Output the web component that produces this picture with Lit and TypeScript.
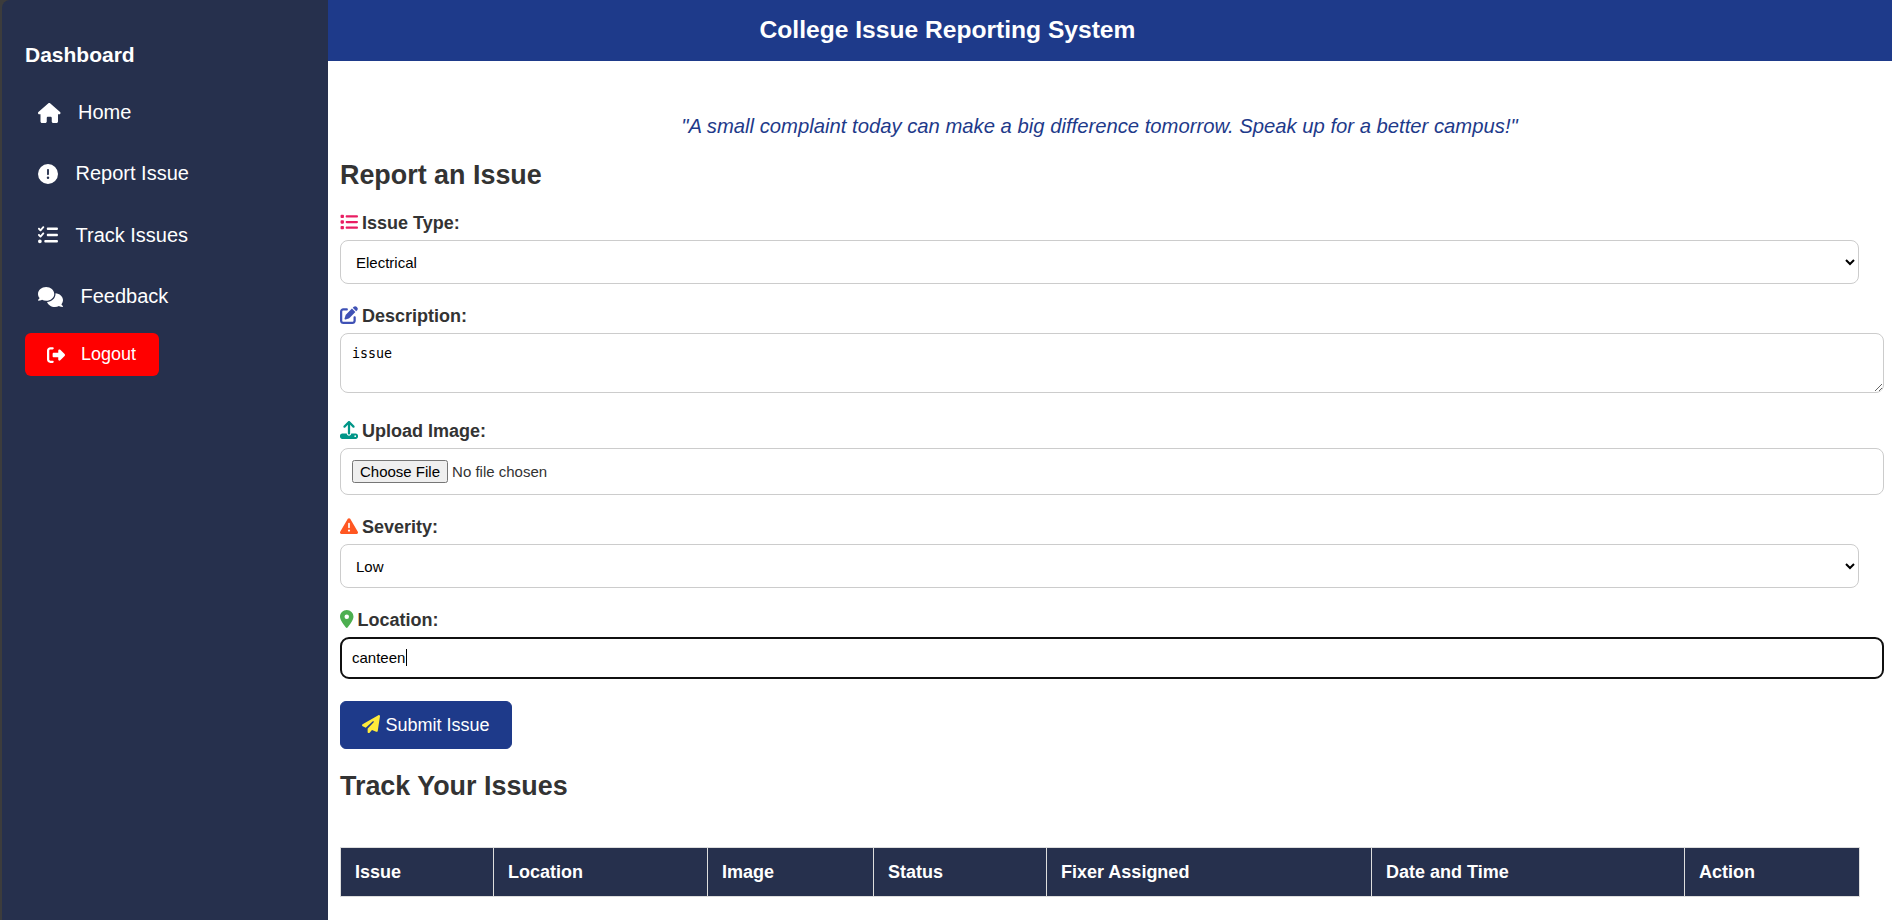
import { LitElement, html, css, svg } from "lit";
import { customElement } from "lit/decorators.js";

const icon = (w: number, d: string, cls = "") =>
  html`<svg class="ico ${cls}" viewBox="0 0 ${w} 512" fill="currentColor">${svg`<path d=${d}></path>`}</svg>`;

const HOUSE = "M575.8 255.5c0 18-15 32.1-32 32.1h-32l.7 160.2c0 2.7-.2 5.4-.5 8.1V472c0 22.1-17.9 40-40 40H456c-1.1 0-2.2 0-3.3-.1c-1.4 .1-2.8 .1-4.2 .1H416 392c-22.1 0-40-17.9-40-40V448 384c0-17.7-14.3-32-32-32H256c-17.7 0-32 14.3-32 32v64 24c0 22.1-17.9 40-40 40H160 128.1c-1.5 0-3-.1-4.5-.2c-1.2 .1-2.4 .2-3.6 .2H104c-22.1 0-40-17.9-40-40V360c0-.9 0-1.9 .1-2.8V287.6H32c-18 0-32-14-32-32.1c0-9 3-17 10-24L266.4 8c7-7 15-8 22-8s15 2 21 7L564.8 231.5c8 7 12 15 11 24z";
const ALERT = "M256 512A256 256 0 1 0 256 0a256 256 0 1 0 0 512zm0-384c13.3 0 24 10.7 24 24V264c0 13.3-10.7 24-24 24s-24-10.7-24-24V152c0-13.3 10.7-24 24-24zM224 352a32 32 0 1 1 64 0 32 32 0 1 1 -64 0z";
const TASKS = "M152.1 38.2c9.9 8.9 10.7 24 1.8 33.9l-72 80c-4.4 4.9-10.6 7.8-17.2 7.9s-12.9-2.4-17.6-7L7 113C-2.3 103.6-2.3 88.4 7 79s24.6-9.4 33.9 0l22.1 22.1 55.1-61.2c8.9-9.9 24-10.7 33.9-1.8zm0 160c9.9 8.9 10.7 24 1.8 33.9l-72 80c-4.4 4.9-10.6 7.8-17.2 7.9s-12.9-2.4-17.6-7L7 273c-9.4-9.4-9.4-24.6 0-33.9s24.6-9.4 33.9 0l22.1 22.1 55.1-61.2c8.9-9.9 24-10.7 33.9-1.8zM224 96c0-17.7 14.3-32 32-32H480c17.7 0 32 14.3 32 32s-14.3 32-32 32H256c-17.7 0-32-14.3-32-32zm0 160c0-17.7 14.3-32 32-32H480c17.7 0 32 14.3 32 32s-14.3 32-32 32H256c-17.7 0-32-14.3-32-32zM160 416c0-17.7 14.3-32 32-32H480c17.7 0 32 14.3 32 32s-14.3 32-32 32H192c-17.7 0-32-14.3-32-32zM48 368a48 48 0 1 1 0 96 48 48 0 1 1 0-96z";
const COMMENTS = "M208 352c114.9 0 208-78.8 208-176S322.9 0 208 0S0 78.8 0 176c0 38.6 14.7 74.3 39.6 103.4c-3.5 9.4-8.7 17.7-14.2 24.7c-4.8 6.2-9.7 11-13.3 14.3c-1.8 1.6-3.3 2.9-4.3 3.7c-.5 .4-.9 .7-1.1 .8l-.2 .2 0 0 0 0C1 327.2-1.4 334.4 .8 340.9S9.1 352 16 352c21.8 0 43.8-5.6 62.1-12.5c9.2-3.5 17.8-7.4 25.3-11.4C134.1 343.3 169.8 352 208 352zM448 176c0 112.3-99.1 196.9-216.5 207C255.8 457.4 336.4 512 432 512c38.2 0 73.9-8.7 104.7-23.9c7.5 4 16 7.9 25.2 11.4c18.3 6.9 40.3 12.5 62.1 12.5c6.9 0 13.1-4.5 15.2-11.1c2.1-6.6-.2-13.8-5.8-17.9l0 0 0 0-.2-.2c-.2-.2-.6-.4-1.1-.8c-1-.8-2.5-2-4.3-3.7c-3.6-3.3-8.5-8.1-13.3-14.3c-5.5-7-10.7-15.4-14.2-24.7c24.9-29 39.6-64.7 39.6-103.4c0-92.8-84.9-168.9-192.6-175.5c.4 5.1 .6 10.3 .6 15.5z";
const SIGNOUT = "M377.9 105.9L500.7 228.7c7.2 7.2 11.3 17.1 11.3 27.3s-4.1 20.1-11.3 27.3L377.9 406.1c-6.4 6.4-15 9.9-24 9.9c-18.7 0-33.9-15.2-33.9-33.9l0-62.1-128 0c-17.7 0-32-14.3-32-32l0-64c0-17.7 14.3-32 32-32l128 0 0-62.1c0-18.7 15.2-33.9 33.9-33.9c9 0 17.6 3.6 24 9.9zM160 96L96 96c-17.7 0-32 14.3-32 32l0 256c0 17.7 14.3 32 32 32l64 0c17.7 0 32 14.3 32 32s-14.3 32-32 32l-64 0c-53 0-96-43-96-96L0 128C0 75 43 32 96 32l64 0c17.7 0 32 14.3 32 32s-14.3 32-32 32z";
const LIST = "M40 48C26.7 48 16 58.7 16 72v48c0 13.3 10.7 24 24 24H88c13.3 0 24-10.7 24-24V72c0-13.3-10.7-24-24-24H40zM192 64c-17.7 0-32 14.3-32 32s14.3 32 32 32H480c17.7 0 32-14.3 32-32s-14.3-32-32-32H192zm0 160c-17.7 0-32 14.3-32 32s14.3 32 32 32H480c17.7 0 32-14.3 32-32s-14.3-32-32-32H192zm0 160c-17.7 0-32 14.3-32 32s14.3 32 32 32H480c17.7 0 32-14.3 32-32s-14.3-32-32-32H192zM16 232v48c0 13.3 10.7 24 24 24H88c13.3 0 24-10.7 24-24V232c0-13.3-10.7-24-24-24H40c-13.3 0-24 10.7-24 24zM40 368c-13.3 0-24 10.7-24 24v48c0 13.3 10.7 24 24 24H88c13.3 0 24-10.7 24-24V392c0-13.3-10.7-24-24-24H40z";
const EDIT = "M471.6 21.7c-21.9-21.9-57.3-21.9-79.2 0L362.3 51.7l97.9 97.9 30.1-30.1c21.9-21.9 21.9-57.3 0-79.2L471.6 21.7zm-299.2 220c-6.1 6.1-10.8 13.6-13.5 21.9l-29.6 88.8c-2.9 8.6-.6 18.1 5.8 24.6s15.9 8.7 24.6 5.8l88.8-29.6c8.2-2.7 15.7-7.4 21.9-13.5L437.7 172.3 339.7 74.3 172.4 241.7zM96 64C43 64 0 107 0 160V416c0 53 43 96 96 96H352c53 0 96-43 96-96V320c0-17.7-14.3-32-32-32s-32 14.3-32 32v96c0 17.7-14.3 32-32 32H96c-17.7 0-32-14.3-32-32V160c0-17.7 14.3-32 32-32h96c17.7 0 32-14.3 32-32s-14.3-32-32-32H96z";
const UPLOAD = "M288 109.3V352c0 17.7-14.3 32-32 32s-32-14.3-32-32V109.3l-73.4 73.4c-12.5 12.5-32.8 12.5-45.3 0s-12.5-32.8 0-45.3l128-128c12.5-12.5 32.8-12.5 45.3 0l128 128c12.5 12.5 12.5 32.8 0 45.3s-32.8 12.5-45.3 0L288 109.3zM64 352H192c0 35.3 28.7 64 64 64s64-28.7 64-64H448c35.3 0 64 28.7 64 64v32c0 35.3-28.7 64-64 64H64c-35.3 0-64-28.7-64-64V416c0-35.3 28.7-64 64-64zM432 456a24 24 0 1 0 0-48 24 24 0 1 0 0 48z";
const WARN = "M256 32c14.2 0 27.3 7.5 34.5 19.8l216 368c7.3 12.4 7.3 27.7 .2 40.1S486.3 480 472 480H40c-14.3 0-27.6-7.7-34.7-20.1s-7-27.8 .2-40.1l216-368C228.7 39.5 241.8 32 256 32zm0 128c-13.3 0-24 10.7-24 24V296c0 13.3 10.7 24 24 24s24-10.7 24-24V184c0-13.3-10.7-24-24-24zm32 224a32 32 0 1 0 -64 0 32 32 0 1 0 64 0z";
const PIN = "M215.7 499.2C267 435 384 279.4 384 192C384 86 298 0 192 0S0 86 0 192c0 87.4 117 243 168.3 307.2c12.3 15.3 35.1 15.3 47.4 0zM192 128a64 64 0 1 1 0 128 64 64 0 1 1 0-128z";
const PLANE = "M498.1 5.6c10.1 7 15.4 19.1 13.5 31.2l-64 416c-1.5 9.7-7.4 18.2-16 23s-18.9 5.4-28 1.6L284 427.7l-68.5 74.1c-8.9 9.7-22.9 12.9-35.2 8.1S160 493.2 160 480V396.4c0-4 1.5-7.8 4.2-10.7L331.8 202.8c5.8-6.3 5.6-16-.4-22s-15.7-6.4-22-.7L106 360.8 17.7 316.6C7.1 311.3 .3 300.7 0 288.9s5.9-22.8 16.1-28.7l448-256c10.7-6.1 23.9-5.5 34 1.4z";

const NAV = [
  { label: "Home", w: 576, d: HOUSE },
  { label: "Report Issue", w: 512, d: ALERT },
  { label: "Track Issues", w: 512, d: TASKS },
  { label: "Feedback", w: 640, d: COMMENTS },
];

const COLS = [
  ["Issue", 153],
  ["Location", 214],
  ["Image", 166],
  ["Status", 173],
  ["Fixer Assigned", 325],
  ["Date and Time", 313],
  ["Action", 175],
] as const;

@customElement("app-root")
export class AppRoot extends LitElement {
  static styles = css`
    :host {
      display: block;
      font-family: "Liberation Sans", Arial, sans-serif;
      color: #333;
    }
    .shell {
      display: flex;
      height: 920px;
      overflow: hidden;
      background: #3c3c3c;
    }
    .ico {
      height: 1em;
      width: auto;
      display: inline-block;
      vertical-align: -0.125em;
    }

    .sidebar {
      flex: 0 0 326px;
      box-sizing: border-box;
      padding: 43px 0 0 23px;
      margin-left: 2px;
      background: #26304d;
      border-top-left-radius: 8px;
      color: #fff;
    }
    .sidebar h3 {
      margin: 0 0 15px;
      font-size: 21px;
      line-height: 24px;
    }
    .nav a {
      display: flex;
      align-items: center;
      height: 61.3px;
      padding-left: 13px;
      font-size: 20px;
      color: #fff;
      text-decoration: none;
    }
    .nav .ico {
      margin-right: 17.5px;
    }
    .logout {
      display: flex;
      align-items: center;
      width: 134px;
      height: 43px;
      margin-top: 6px;
      box-sizing: border-box;
      padding: 0 0 0 22px;
      border: 0;
      border-radius: 6px;
      background: #ff0000;
      color: #fff;
      font: 18px "Liberation Sans", Arial, sans-serif;
    }
    .logout .ico {
      margin-right: 16px;
    }

    .page {
      flex: 1;
      min-width: 0;
      background: #fff;
    }
    .topbar {
      height: 61px;
      padding-right: 325px;
      background: #1e3a8a;
      color: #fff;
      font-size: 24.6px;
      font-weight: bold;
      line-height: 59px;
      text-align: center;
    }
    .content {
      padding: 54px 33px 0 12px;
    }
    .quote {
      margin: 0;
      color: #1e3a8a;
      font-size: 20.25px;
      font-style: italic;
      line-height: 23px;
      text-align: center;
    }
    h2 {
      margin: 0;
      font-size: 26.9px;
      line-height: 32px;
    }
    .report {
      margin: 21px 0 0;
    }
    form {
      padding-top: 22px;
    }
    .field {
      margin-bottom: 22px;
    }
    .field.tall {
      margin-bottom: 28px;
    }
    label {
      display: block;
      height: 20px;
      margin-bottom: 7px;
      font-size: 18px;
      font-weight: bold;
      line-height: 20px;
    }
    label .ico {
      margin-right: 4px;
    }
    .c-list { color: #e91e63; }
    .c-edit { color: #3f51b5; }
    .c-upload { color: #009688; }
    .c-warn { color: #ff5722; }
    .c-pin { color: #4caf50; }

    select,
    textarea,
    input {
      border: 1px solid #ccc;
      border-radius: 8px;
      font-family: "Liberation Sans", Arial, sans-serif;
      font-size: 15px;
      color: #000;
      background: #fff;
    }
    select {
      display: block;
      box-sizing: border-box;
      width: 100%;
      height: 44px;
      padding: 0 11px;
    }
    textarea {
      display: block;
      box-sizing: content-box;
      width: 100%;
      height: 34px;
      padding: 12px 12px 12px 11px;
      font-family: "DejaVu Sans Mono", monospace;
      font-size: 13.33px;
      line-height: 16px;
    }
    input {
      display: block;
      box-sizing: content-box;
      width: 100%;
      padding: 11px 12px 11px 11px;
      line-height: 18px;
    }
    input[type="file"] {
      height: 23px;
      line-height: 23px;
      color: #333;
    }
    input[type="text"] {
      caret-color: transparent;
    }
    .caret-wrap {
      position: relative;
    }
    .caret {
      position: absolute;
      left: 66px;
      top: 12px;
      width: 1px;
      height: 17px;
      background: #000;
    }
    .button-row {
      margin-top: 22px;
    }
    .submit {
      display: block;
      width: 172px;
      height: 48px;
      padding: 0;
      border: 1px solid #1e3a8a;
      border-radius: 6px;
      background: #1e3a8a;
      color: #fff;
      font: 18px "Liberation Sans", Arial, sans-serif;
    }
    .submit .ico {
      color: #ffeb3b;
    }
    .track {
      margin: 21px 0 45px;
    }
    table {
      width: 100%;
      table-layout: fixed;
      border-collapse: collapse;
    }
    th {
      height: 49px;
      box-sizing: border-box;
      padding: 0 14px;
      border: 1px solid #ddd;
      background: #26304d;
      color: #fff;
      font-size: 18px;
      font-weight: bold;
      text-align: left;
    }
  `;

  firstUpdated() {
    const input = this.renderRoot.querySelector<HTMLInputElement>("#location");
    if (input) {
      input.focus();
      input.setSelectionRange(7, 7);
    }
  }

  render() {
    return html`
      <div class="shell">
        <aside class="sidebar">
          <h3>Dashboard</h3>
          <nav class="nav">
            ${NAV.map((n) => html`<a href="#">${icon(n.w, n.d)}${n.label}</a>`)}
          </nav>
          <button class="logout">${icon(512, SIGNOUT)}Logout</button>
        </aside>
        <div class="page">
          <header class="topbar">College Issue Reporting System</header>
          <main class="content">
            <p class="quote">"A small complaint today can make a big difference tomorrow. Speak up for a better campus!"</p>
            <h2 class="report">Report an Issue</h2>
            <form @submit=${(e: Event) => e.preventDefault()}>
              <div class="field">
                <label>${icon(512, LIST, "c-list")}Issue Type:</label>
                <select>
                  <option>Electrical</option>
                  <option>Plumbing</option>
                  <option>Other</option>
                </select>
              </div>
              <div class="field tall">
                <label>${icon(512, EDIT, "c-edit")}Description:</label>
                <textarea .value=${"issue"}></textarea>
              </div>
              <div class="field">
                <label>${icon(512, UPLOAD, "c-upload")}Upload Image:</label>
                <input type="file" />
              </div>
              <div class="field">
                <label>${icon(512, WARN, "c-warn")}Severity:</label>
                <select>
                  <option>Low</option>
                  <option>Medium</option>
                  <option>High</option>
                </select>
              </div>
              <div class="field">
                <label>${icon(384, PIN, "c-pin")}Location:</label>
                <div class="caret-wrap">
                  <input id="location" type="text" .value=${"canteen"} />
                  <span class="caret"></span>
                </div>
              </div>
              <div class="button-row">
                <button class="submit">${icon(512, PLANE)} Submit Issue</button>
              </div>
            </form>
            <h2 class="track">Track Your Issues</h2>
            <table>
              <colgroup>
                ${COLS.map((c) => html`<col style="width:${c[1]}px" />`)}
              </colgroup>
              <thead>
                <tr>${COLS.map((c) => html`<th>${c[0]}</th>`)}</tr>
              </thead>
            </table>
          </main>
        </div>
      </div>
    `;
  }
}
